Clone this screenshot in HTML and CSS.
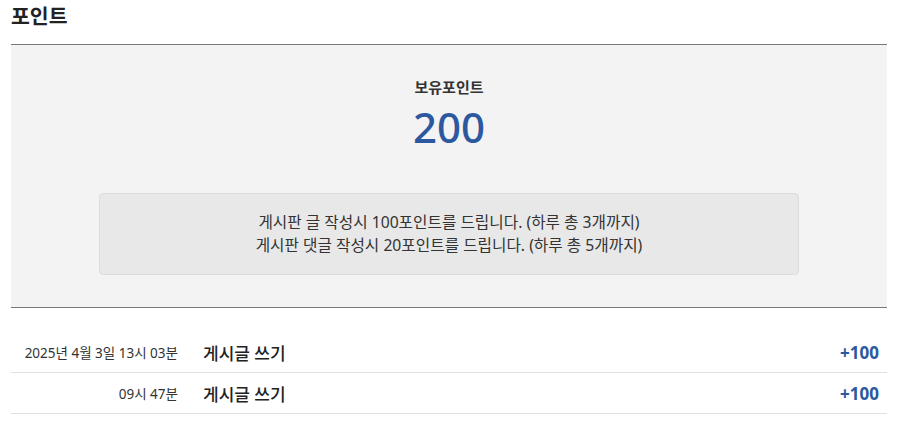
FILE: index.html
```html
<!DOCTYPE html>
<html lang="ko">
<head>
<meta charset="utf-8">
<link rel="stylesheet" href="styles.css">
</head>
<body>
<div class="page">
  <h1 class="title">포인트</h1>
  <section class="summary">
    <div class="label">보유포인트</div>
    <div class="amount">200</div>
    <div class="notice">
      <p>게시판 글 작성시 100포인트를 드립니다. (하루 총 3개까지)</p>
      <p>게시판 댓글 작성시 20포인트를 드립니다. (하루 총 5개까지)</p>
    </div>
  </section>
  <ul class="history">
    <li class="row">
      <span class="date">2025년 4월 3일 13시 03분</span>
      <span class="desc">게시글 쓰기</span>
      <span class="pts">+100</span>
    </li>
    <li class="row">
      <span class="date">09시 47분</span>
      <span class="desc">게시글 쓰기</span>
      <span class="pts">+100</span>
    </li>
  </ul>
</div>
</body>
</html>
```

FILE: styles.css
```css
* { box-sizing: border-box; }
body {
  margin: 0;
  background: #fff;
  font-family: "Noto Sans", "Noto Sans CJK KR", sans-serif;
  color: #222;
}
.page {
  padding: 0 30px 0 11px;
}
.title {
  margin: 0;
  height: 44px;
  padding-top: 1px;
  font-size: 20.5px;
  font-weight: 700;
  line-height: 30px;
  color: #222;
}
.summary {
  background: #f3f3f3;
  border-top: 1px solid #777;
  border-bottom: 1px solid #777;
  height: 264px;
  display: flex;
  flex-direction: column;
  align-items: center;
  padding-top: 32px;
}
.label {
  font-size: 15px;
  font-weight: 700;
  line-height: 20px;
  color: #333;
}
.amount {
  font-size: 42px;
  font-weight: 500;
  line-height: 46px;
  color: #2c58a0;
  margin-top: 7px;
}
.notice {
  margin-top: 43px;
  width: 700px;
  height: 82px;
  background: #e8e8e8;
  border: 1px solid #dcdcdc;
  border-radius: 4px;
  display: flex;
  flex-direction: column;
  justify-content: center;
  align-items: center;
  font-size: 15.7px;
  line-height: 23px;
  color: #333;
}
.notice p { margin: 0; }
.history {
  list-style: none;
  margin: 0;
  padding: 24px 0 0;
}
.row {
  display: flex;
  align-items: center;
  height: 41px;
  border-bottom: 1px solid #e0e0e0;
  padding-top: 0;
}
.date {
  width: 167px;
  text-align: right;
  font-size: 13.5px;
  color: #333;
}
.desc {
  margin-left: 25px;
  font-size: 17px;
  font-weight: 500;
  color: #222;
  flex: 1;
}
.pts {
  padding-right: 8px;
  font-size: 17px;
  font-weight: 700;
  color: #2c58a0;
}
```
